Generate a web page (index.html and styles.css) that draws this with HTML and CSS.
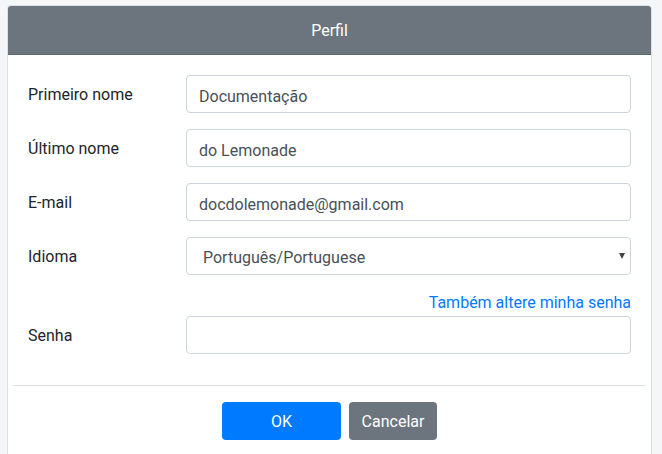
FILE: index.html
```html
<!DOCTYPE html>
<html lang="pt">
<head>
<meta charset="utf-8">
<title>Perfil</title>
<link rel="stylesheet" href="styles.css">
</head>
<body>
<div class="dialog">
  <div class="dialog-header">Perfil</div>
  <form class="dialog-body">
    <div class="row">
      <label class="label" for="first">Primeiro nome</label>
      <input class="control" id="first" type="text" value="Documentação">
    </div>
    <div class="row">
      <label class="label" for="last">Último nome</label>
      <input class="control" id="last" type="text" value="do Lemonade">
    </div>
    <div class="row">
      <label class="label" for="mail">E-mail</label>
      <input class="control" id="mail" type="text" value="docdolemonade@gmail.com">
    </div>
    <div class="row">
      <label class="label" for="lang">Idioma</label>
      <div class="select-wrap">
        <select class="control select" id="lang">
          <option>Português/Portuguese</option>
        </select>
        <span class="caret"></span>
      </div>
    </div>
    <div class="link-row">
      <a class="link" href="#">Também altere minha senha</a>
    </div>
    <div class="row last">
      <label class="label" for="pwd">Senha</label>
      <input class="control" id="pwd" type="password" value="">
    </div>
  </form>
  <div class="dialog-footer">
    <button class="btn btn-primary" type="button">OK</button>
    <button class="btn btn-secondary" type="button">Cancelar</button>
  </div>
</div>
</body>
</html>
```

FILE: styles.css
```css
html, body {
  margin: 0;
  padding: 0;
  background: #f5f6f8;
  font-family: Roboto, "Liberation Sans", sans-serif;
  font-size: 16px;
  color: #212529;
  overflow: hidden;
}

.dialog {
  box-sizing: border-box;
  width: 645px;
  margin: 5px 0 0 7px;
  height: 460px;
  background: #fff;
  border: 1px solid #dcdfe3;
  border-radius: 4px 4px 0 0;
}

.dialog-header {
  height: 48px;
  background: #6c757d;
  border-bottom: 1px solid #5f676e;
  border-radius: 3px 3px 0 0;
  color: #fff;
  display: flex;
  align-items: center;
  justify-content: center;
  font-size: 16px;
}

.dialog-body {
  padding: 20px 20px 15px 20px;
  margin: 0;
}

.row {
  display: grid;
  grid-template-columns: 158px 1fr;
  align-items: center;
  margin-bottom: 16px;
}

.label {
  color: #212529;
  line-height: 24px;
  padding-top: 2px;
}

.control {
  box-sizing: border-box;
  width: 100%;
  height: 38px;
  padding: 8px 12px 4px 12px;
  border: 1px solid #ced4da;
  border-radius: 4px;
  background: #fff;
  color: #495057;
  font-family: Roboto, "Liberation Sans", sans-serif;
  font-size: 16px;
  line-height: 24px;
  outline: none;
}

.select-wrap {
  position: relative;
}

.select {
  -webkit-appearance: none;
  appearance: none;
  padding-left: 16px;
}

.caret {
  position: absolute;
  right: 6px;
  top: 16px;
  width: 0;
  height: 0;
  border-left: 3px solid transparent;
  border-right: 3px solid transparent;
  border-top: 6px solid #444;
}

.link-row {
  display: flex;
  justify-content: flex-end;
  margin-top: 0;
  margin-bottom: 1px;
}

.link {
  color: #007bff;
  text-decoration: none;
  line-height: 24px;
}

.dialog-footer {
  margin: 0 5px;
  border-top: 1px solid #dee2e6;
  padding-top: 16px;
  display: flex;
  justify-content: center;
  gap: 8px;
}

.btn {
  height: 38px;
  border: none;
  border-radius: 4px;
  color: #fff;
  font-family: Roboto, "Liberation Sans", sans-serif;
  font-size: 16px;
  padding: 0 12px;
  cursor: pointer;
}

.btn-primary {
  background: #007bff;
  width: 119px;
}

.btn-secondary {
  background: #6c757d;
  width: 88px;
}
```
